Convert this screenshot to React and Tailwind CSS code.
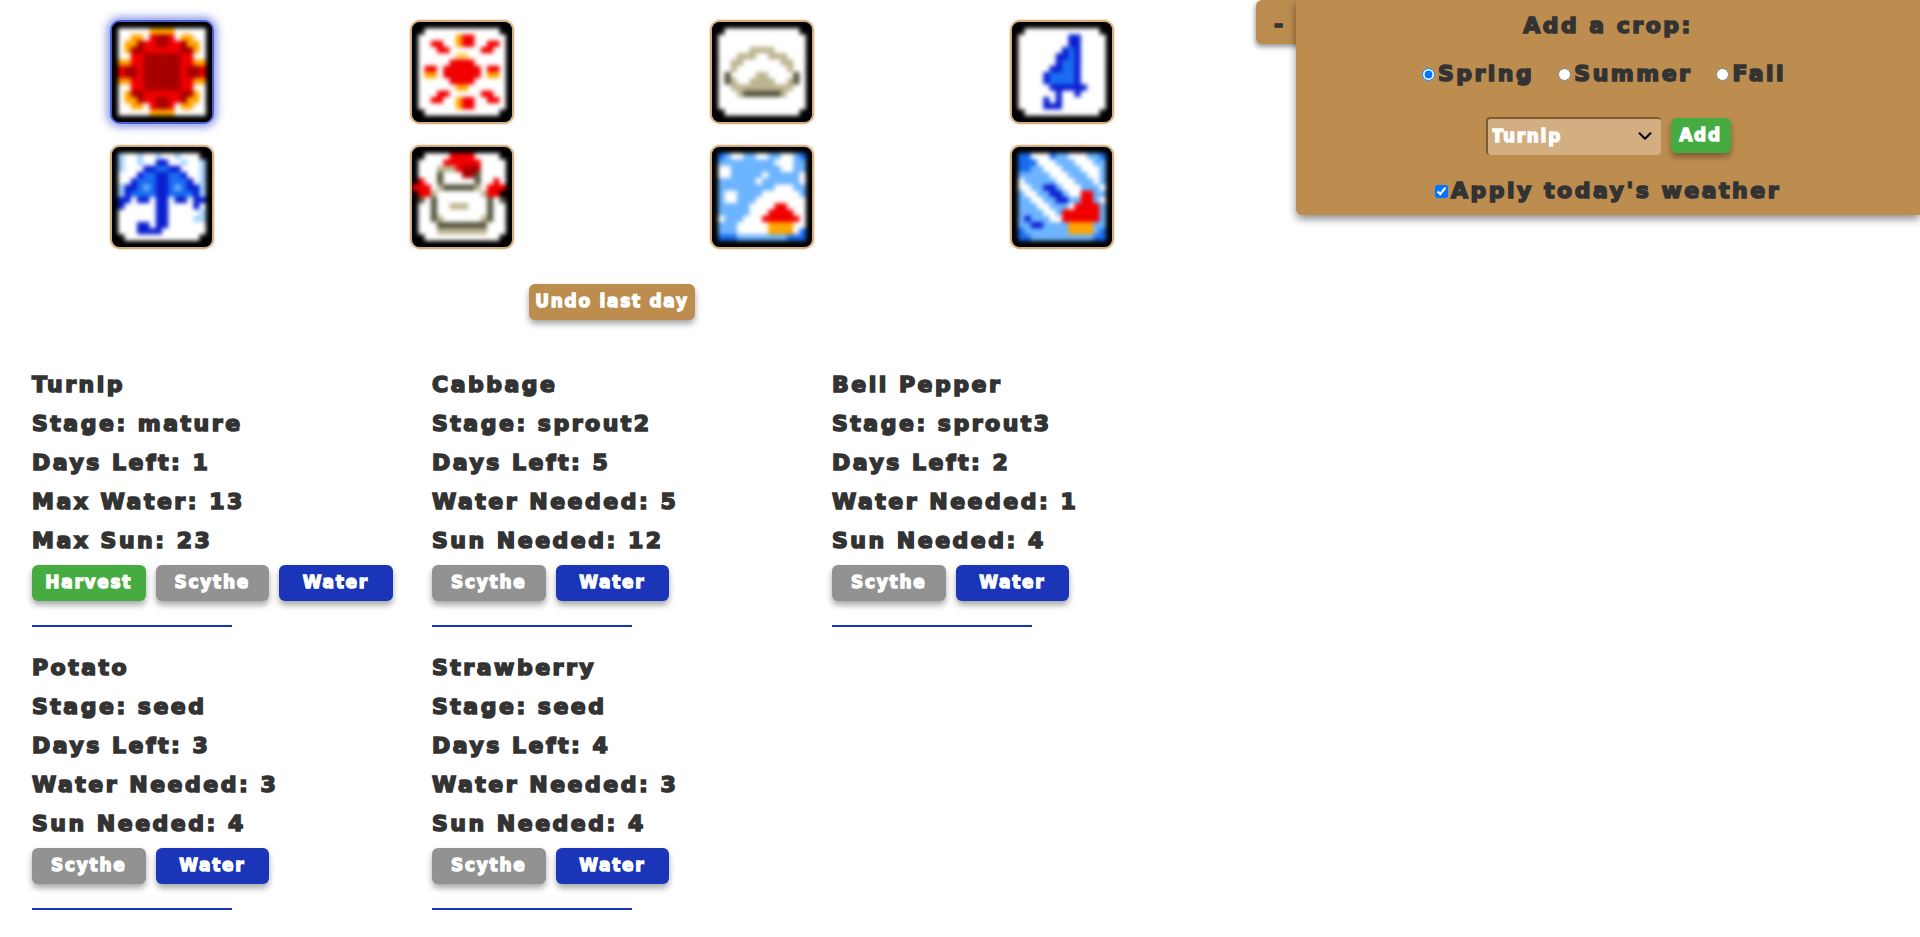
import React, { useState } from 'react';
import { ChevronDown } from 'lucide-react';

const colors = {
  k: '#000000', w: '#ffffff', R: '#f00000', D: '#a80000', O: '#ffa500', Y: '#ffd060',
  T: '#bdb590', G: '#55553f', B: '#0a1fd0', M: '#1a6cf0', L: '#6cb4ff', S: '#a8d4ff',
};

// weather icons, 16x16 pixels, softened like the scaled-up sprites
const icons = [
  ['kkkkkkkkkkkkkkkk','kwwwwwOOOOwwwwwk','kwwOOwRDDRwOOwwk','kwOODRRDDRRDOOwk','kwODDRRRRRRDDOwk','kwwRRDDDDDDRRwwk','kOORRDDDDDDRROOk','kRDDRDDDDDDRDDRk','kRDDRDDDDDDRDDRk','kOORRDDDDDDRROOk','kwwRRDDDDDDRRwwk','kwODDRRRRRRDDOwk','kwOODRRDDRRDOOwk','kwwOOwRDDRwOOwwk','kwwwwwOOOOwwwwwk','kkkkkkkkkkkkkkkk'],
  ['kkkkkkkkkkkkkkkk','kkwwwwwwwwwwwwkk','kwwwwwwORRwwwwwk','kwwRRwwORRwwRRwk','kwwwRRwwwwwRRwwk','kwwwwwwYYwwwwwwk','kwwwwwRRRRwwwwwk','kwRRwRRRRRRwRRwk','kwOOwRRRRRRwOOwk','kwwwwwRRRRwwwwwk','kwwwwwwOOwwwwwwk','kwwwRRwwwwwRRwwk','kwwRRwwORRwwRRwk','kwwwwwwORRwwwwwk','kkwwwwwwwwwwwwkk','kkkkkkkkkkkkkkkk'],
  ['kkkkkkkkkkkkkkkk','kkwwwwwwwwwwwwkk','kwwwwwwwwwwwwwwk','kwwwwwwwwwwwwwwk','kwwwwwTTTTwwwwwk','kwwwTTTwwTTTwwwk','kwwTTwwwwwwTTwwk','kwwTwwwwwwwwTwwk','kwGwwwwTTwwwwGwk','kwGTwwTTTTwwTGwk','kwwTTTTTTTTTTwwk','kwwwTGGGGGGTwwwk','kwwwwwwwwwwwwwwk','kwwwwwwwwwwwwwwk','kkwwwwwwwwwwwwkk','kkkkkkkkkkkkkkkk'],
  ['kkkkkkkkkkkkkkkk','kkwwwwwwwwwwwwkk','kwwwwwwwwBBwwwwk','kwwwwwwwwBBwwwwk','kwwwwwwwBMBwwwwk','kwwwwwwBBMBwwwwk','kwwwwwwBMMBwwwwk','kwwwwwBBMMBwwwwk','kwwwwBMMMMBwwwwk','kwwwwBMMMMBwwwwk','kwwwwwBBBBBBwwwk','kwwwwwwBwwBwwwwk','kwwwwBwBwwwwwwwk','kwwwwBBBwwwwwwwk','kkwwwwwwwwwwwwkk','kkkkkkkkkkkkkkkk'],
  ['kkkkkkkkkkkkkkkk','kSwwSwwSwwSwwwkk','kSwwSwwBBwwSwwSk','kSwwwBBMMBBwwwSk','kwwwBMMBBMMBwwSk','kwwBMMMBBMMMBwSk','kSBBMLMBBMLMBBSk','kSBMMMMBBMMMMBSk','kBBwBBwBBwBBwBBk','kBwwwwwBBwwwwBwk','kwwwwwwBBwwwwwSk','kwwwwwwBBwwwwSSk','kwwwBBwBBwwwwwwk','kwwwBBBBwwwwwwwk','kkwwwwwwwwwwwwkk','kkkkkkkkkkkkkkkk'],
  ['kkkkkkkkkkkkkkkk','kkwwwwRRRRwwwwkk','kwwwwRRRRRRwwwwk','kwwwTTTRDDDwwwwk','kwwwGwwwDDGwwwwk','kRwwGwwwwwGwwRwk','RRRwTGGGGGTwRRRk','kRRTwwwwwwwTRRkk','kGwGwwwwwwwwGwGk','kwwGwwTTTwwwGwwk','kwwGwwwwwwwwGwwk','kwwGTwwwwwwTGwwk','kwwwGGGGGGGGwwwk','kwwwTTTTTTTTwwwk','kkwwwwwwwwwwwwkk','kkkkkkkkkkkkkkkk'],
  ['kkkkkkkkkkkkkkkk','kMLwwLLwwLLwwLMk','kLLLLLLLLLwwwLLk','kwwLLLLLLLLwwLLk','kwwLLLLLwLLLLLwk','kLLLLLLwLLLLLLwk','kLLLLLLLLLwwwLLk','kLwwLLLLwwwwwwLk','kLwwLLLwwwwwwwwk','kLLLLLwwwwRRwwwk','kLLLLLwwwRRRRwwk','kwLLLwwwRRRRRRwk','kLLLwwwwwOOOOwwk','kLLLwwwwwOOOOwMk','kMMMLLLLLLLLMMMk','kkkkkkkkkkkkkkkk'],
  ['kkkkkkkkkkkkkkkk','kMMwwwMLLwwwLLMk','kMMMwwwLLLwwwLLk','kMMLLwwwLLLwwwLk','kLLLLLwwwLLLwwLk','kwLLLLLwwwLLLwLk','kwwLLBBLwwwLLLwk','kLwwLLBBLwwRRLLk','kLLwwLLBBLLRRLwk','kLLLwwLLLwRRRRLk','kLLLLwwLRRRRRRLk','kLBLLLwwRRRRRRLk','kLLBBLLLLOOOOLLk','kMLLLLLLLOOOOLMk','kMMLLLLLLLLLLMMk','kkkkkkkkkkkkkkkk'],
];

const crops = [
  { name: 'Turnip', lines: ['Stage: mature', 'Days Left: 1', 'Max Water: 13', 'Max Sun: 23'], harvest: true },
  { name: 'Cabbage', lines: ['Stage: sprout2', 'Days Left: 5', 'Water Needed: 5', 'Sun Needed: 12'] },
  { name: 'Bell Pepper', lines: ['Stage: sprout3', 'Days Left: 2', 'Water Needed: 1', 'Sun Needed: 4'] },
  { name: 'Potato', lines: ['Stage: seed', 'Days Left: 3', 'Water Needed: 3', 'Sun Needed: 4'] },
  { name: 'Strawberry', lines: ['Stage: seed', 'Days Left: 4', 'Water Needed: 3', 'Sun Needed: 4'] },
];

function Icon({ rows, selected }) {
  return (
    <button
      className={`block w-[104px] h-[104px] rounded-[10px] border-2 bg-black overflow-hidden ${
        selected ? 'border-[#4a5fd0] shadow-[0_0_8px_3px_rgba(60,80,210,0.6)]' : 'border-[#d4ae7e] shadow-[0_0_2px_rgba(190,140,80,0.7)]'
      }`}
    >
      <svg viewBox="0 0 16 16" className="w-[100px] h-[100px] blur-[2px]">
        {rows.map((row, y) =>
          row.split('').map((c, x) => <rect key={x} x={x} y={y} width="1.3" height="1.3" fill={colors[c]} />)
        )}
      </svg>
    </button>
  );
}

function ActionButton({ label, color }) {
  return (
    <button className={`w-[113.5px] h-9 rounded-md text-white text-[17px] tracking-[1.7px] [-webkit-text-stroke:1.3px_white] shadow-[0_4px_6px_rgba(0,0,0,0.35)] ${color}`}>
      {label}
    </button>
  );
}

function CropCard({ crop }) {
  return (
    <div className="h-[283px]">
      <p className="leading-[39px] pt-[2px] -mb-[2px]">{crop.name}</p>
      {crop.lines.map((line) => (
        <p key={line} className="leading-[39px] pt-[2px] -mb-[2px]">{line}</p>
      ))}
      <div className="flex gap-[10px] mt-[7px]">
        {crop.harvest && <ActionButton label="Harvest" color="bg-[#46ab41]" />}
        <ActionButton label="Scythe" color="bg-[#929292]" />
        <ActionButton label="Water" color="bg-[#1a35b8]" />
      </div>
      <div className="w-[200px] h-0.5 bg-[#1a35b8] mt-[24px]" />
    </div>
  );
}

export default function App() {
  const [season, setSeason] = useState('Spring');

  return (
    <div className="relative min-h-[937px] bg-white text-[#333333] text-[22px] font-bold tracking-[2.5px] [-webkit-text-stroke:1.6px_#333333] font-['DejaVu_Sans',sans-serif] overflow-hidden">
      <div className="w-[1200px] ml-3 pt-5">
        <div className="grid grid-cols-4 gap-y-[21px]">
          {icons.map((rows, i) => (
            <div key={i} className="flex justify-center">
              <Icon rows={rows} selected={i === 0} />
            </div>
          ))}
        </div>
        <div className="flex justify-center mt-[35px]">
          <button className="w-[166px] h-9 rounded-md bg-[#bc8d4f] text-white text-[17px] tracking-[1.7px] [-webkit-text-stroke:1.3px_white] shadow-[0_4px_6px_rgba(0,0,0,0.35)]">
            Undo last day
          </button>
        </div>
      </div>

      <div className="grid grid-cols-[400px_400px_400px] ml-8 mt-[43px]">
        {crops.map((crop) => (
          <CropCard key={crop.name} crop={crop} />
        ))}
      </div>

      {/* floating add crop panel, the tab sits behind it */}
      <div className="absolute top-0 right-0 w-[664px] h-[215px]">
        <div className="absolute left-0 top-0 w-12 h-11 bg-[#bc8d4f] rounded-md shadow-[-1px_3px_5px_rgba(0,0,0,0.4)] pl-[18px] leading-[50px]">-</div>
        <div className="absolute left-10 right-0 top-0 h-[215px] bg-[#bc8d4f] rounded-bl-md shadow-[0_4px_8px_rgba(0,0,0,0.45)] flex flex-col items-center">
          <p className="mt-[11px] leading-[30px]">Add a crop:</p>
          <div className="flex items-center gap-[24px] mt-[18px] leading-[30px] -ml-[8px]">
            {['Spring', 'Summer', 'Fall'].map((s) => (
              <label key={s} className="flex items-center gap-[3px]">
                <input type="radio" name="season" checked={season === s} onChange={() => setSeason(s)} />
                {s}
              </label>
            ))}
          </div>
          <div className="flex items-start gap-[10px] mt-[28px]">
            <div className="relative w-[175px] h-[38px]">
              <select className="appearance-none w-full h-full rounded-[4px] border-t-2 border-l-2 border-[#7a5c33] bg-[#d2ae80] text-white text-[17px] tracking-[1.7px] pl-1 [-webkit-text-stroke:1.3px_white]">
                <option>Turnip</option>
              </select>
              <ChevronDown className="absolute right-[5px] top-[8px] w-[22px] h-[22px] text-black pointer-events-none" strokeWidth={2.2} />
            </div>
            <button className="w-[60px] h-[35px] mt-px rounded-md bg-[#46ab41] text-white text-[17px] tracking-[1.7px] [-webkit-text-stroke:1.3px_white] shadow-[0_4px_6px_rgba(0,0,0,0.35)]">
              Add
            </button>
          </div>
          <label className="flex items-center gap-[3px] mt-[21px] leading-[30px]">
            <input type="checkbox" defaultChecked />
            Apply today's weather
          </label>
        </div>
      </div>
    </div>
  );
}
